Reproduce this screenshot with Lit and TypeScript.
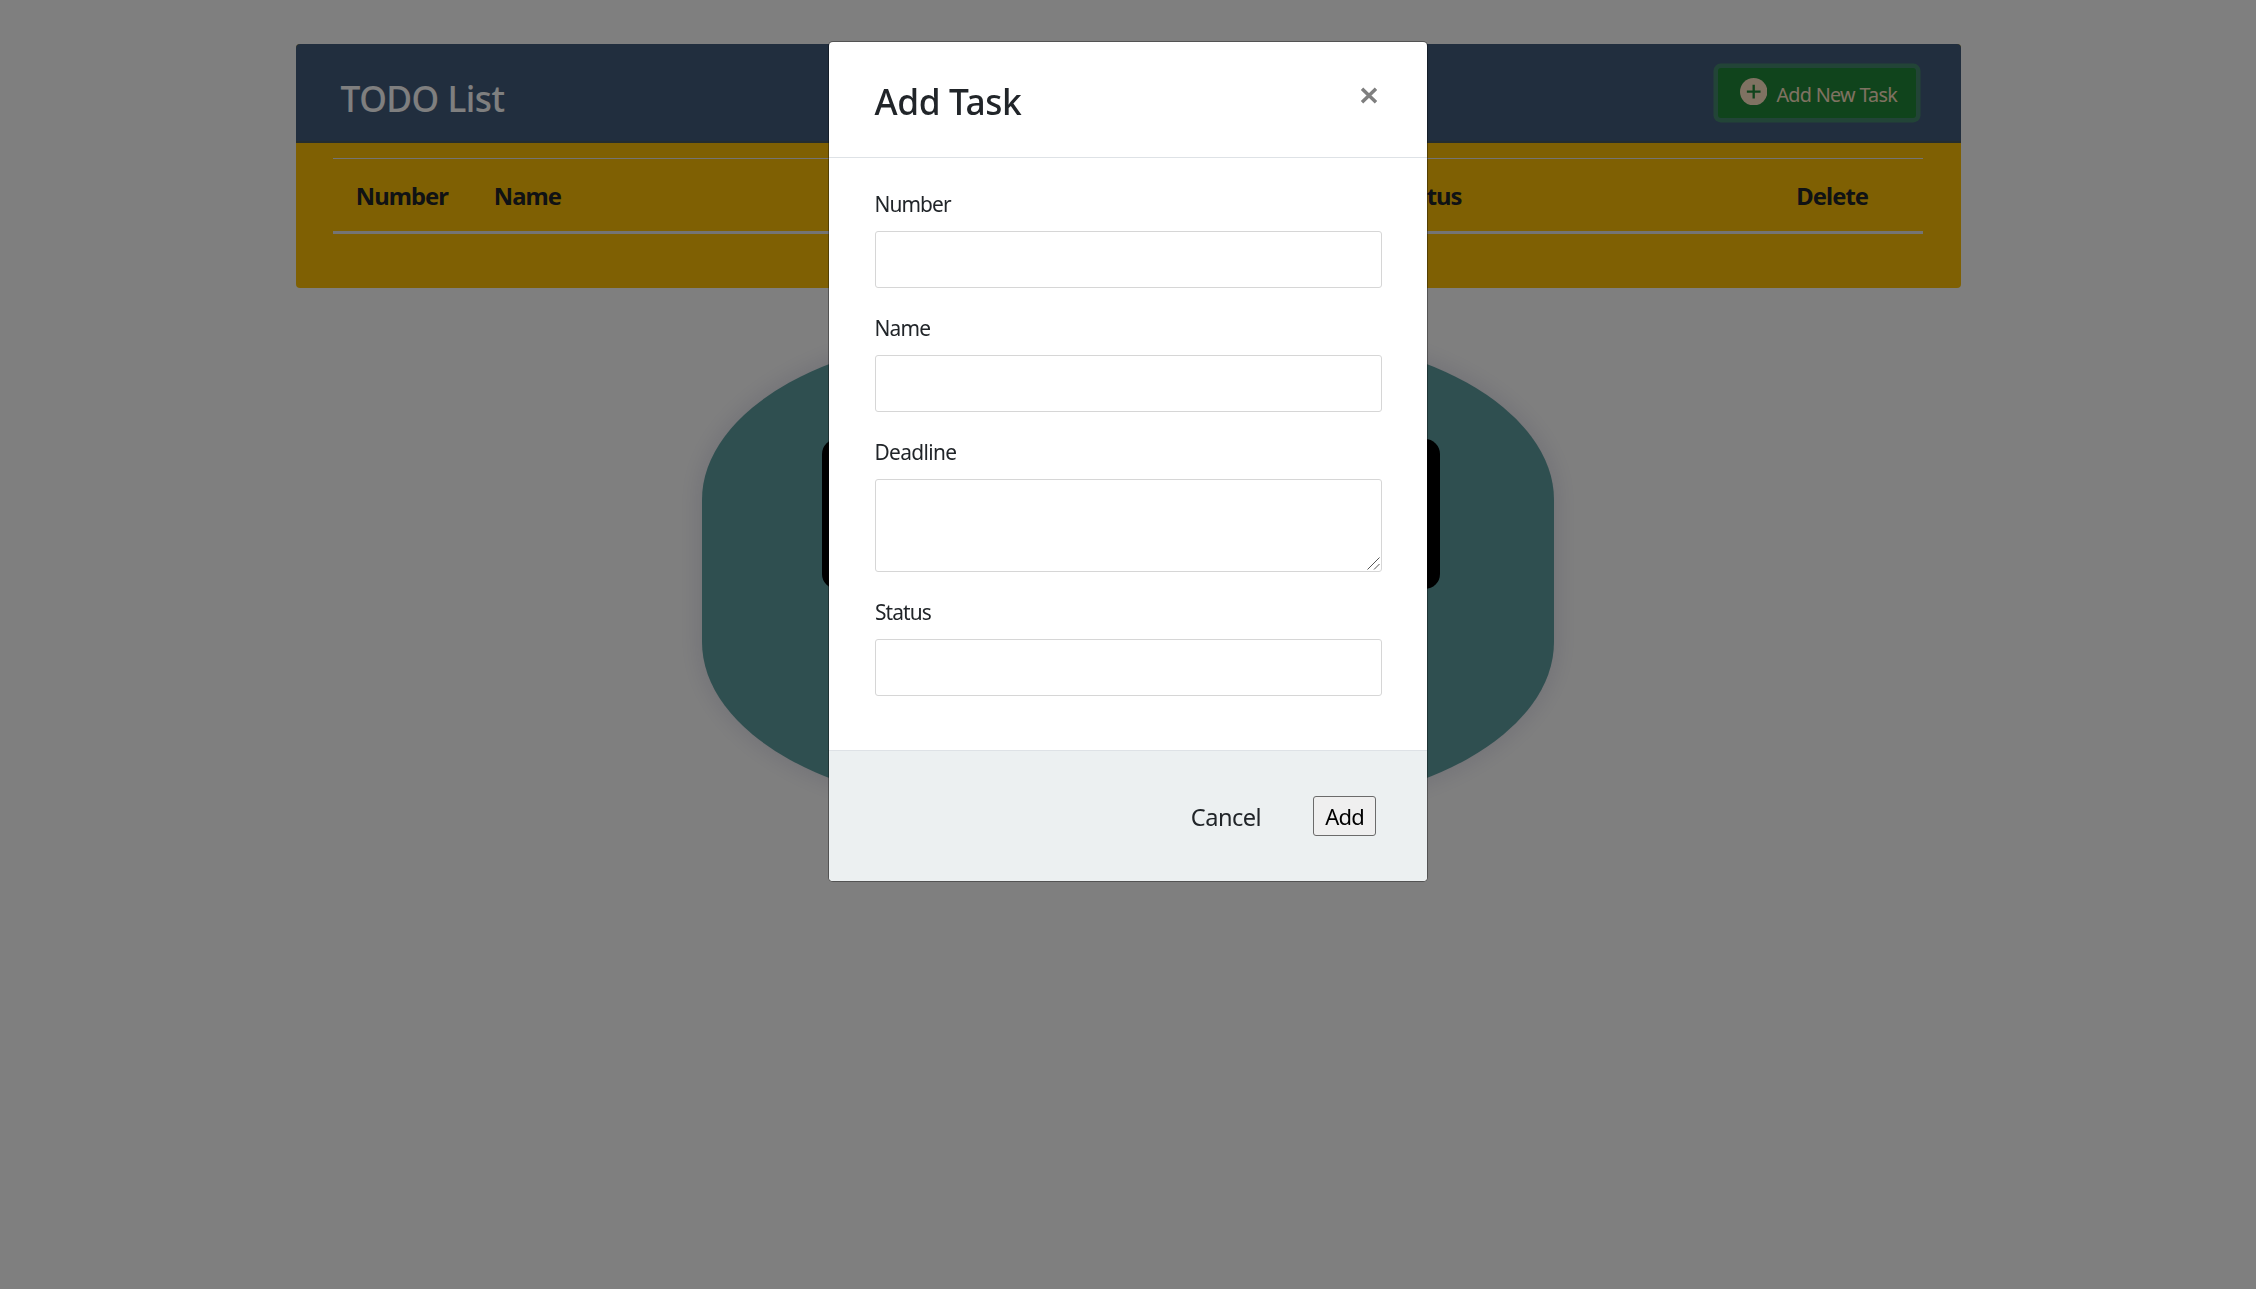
import { LitElement, html, css } from "lit";
import { customElement } from "lit/decorators.js";

@customElement("task-list")
class TaskList extends LitElement {
  static styles = css`
    :host { display: block; }
    .card { background: #ffc107; border-radius: 4px; height: 244px; overflow: hidden; }
    .head {
      box-sizing: border-box; height: 99px; background: #435d7d; border-bottom: 2px solid #4a5a5e;
      display: flex; justify-content: space-between; align-items: flex-start;
      padding: 23.5px 44.5px 0 45px;
    }
    .title { margin: 6.9px 0 0; font-size: 35.3px; line-height: 48px; font-weight: 500; color: #fff; letter-spacing: -0.5px; }
    .new {
      box-sizing: border-box; width: 198px; height: 50.5px; border: 0; border-radius: 3px; padding: 0 0 0 22px;
      background: #218838; color: #ffe4c4; box-shadow: 0 0 0 4.5px rgba(72, 180, 97, 0.5);
      display: flex; align-items: center; gap: 9px; font: 400 19.8px/30px "Noto Sans", sans-serif; letter-spacing: -0.7px;
      white-space: nowrap;
    }
    .new svg { flex: none; width: 27.4px; height: 27.4px; margin-top: -2px; }
    .new span { padding-top: 4px; }
    .table { margin: 15px 38px 0 37px; border-top: 1px solid #e9e9e9; border-bottom: 3px solid #e9e9e9; height: 72px;
      display: grid; grid-template-columns: 138px 477px 421px 404.5px auto; padding-left: 23.3px; align-items: center; }
    .th { font-size: 23.8px; line-height: 32px; font-weight: 700; color: #212529; letter-spacing: -0.95px; padding-top: 1px; }
  `;
  render() {
    return html`
      <section class="card">
        <header class="head">
          <h2 class="title">TODO List</h2>
          <button class="new">
            <svg viewBox="0 0 28 28"><circle cx="14" cy="14" r="14" fill="#ffe4c4" /><path d="M14 7v14M7 14h14" stroke="#218838" stroke-width="2.4" /></svg>
            <span>Add New Task</span>
          </button>
        </header>
        <div class="table">
          ${["Number", "Name", "Deadline", "Status", "Delete"].map((t) => html`<div class="th">${t}</div>`)}
        </div>
      </section>
    `;
  }
}

@customElement("task-dialog")
class TaskDialog extends LitElement {
  static styles = css`
    :host { display: block; width: 598px; height: 839px; background: #fff; border-radius: 4px; overflow: hidden; box-shadow: 0 0 0 1px rgba(0, 0, 0, 0.35); color: #212529; }
    .head { box-sizing: border-box; height: 116px; border-bottom: 1px solid #dee2e6; padding: 35.4px 49px 0 45.5px; display: flex; justify-content: space-between; }
    .title { margin: 0; font-size: 35.3px; line-height: 48px; font-weight: 500; letter-spacing: -0.4px; }
    .close { width: 18px; height: 17px; margin-top: 9.8px; display: block; }
    .body { padding: 31px 45.5px 54.3px 46px; display: grid; gap: 25.4px; }
    .field { display: grid; gap: 12px; }
    .label { font-size: 20.9px; line-height: 30px; margin-left: -0.5px; }
    .number { letter-spacing: -0.9px; }
    .name { letter-spacing: -0.8px; }
    .deadline { letter-spacing: -0.65px; }
    .status { letter-spacing: -0.9px; margin-left: 0; }
    .input { box-sizing: border-box; width: 100%; height: 56.6px; border: 1px solid #d6d6d6; border-radius: 3px; background: #fff; display: block; margin: 0; outline: 0; }
    .area { position: relative; height: 92.7px; }
    .area .input { height: 100%; resize: none; }
    .grip { position: absolute; right: 2px; bottom: 2px; width: 13px; height: 13px; }
    .foot { box-sizing: border-box; height: 131px; background: #ecf0f1; border-top: 1px solid #dee2e6; display: flex; justify-content: flex-end; align-items: flex-start; gap: 52px; padding: 45px 51px 0 0; }
    .cancel { border: 0; padding: 0; background: none; color: #212529; font: 400 23.6px/40px "Noto Sans", sans-serif; letter-spacing: -0.55px; padding-top: 1px; }
    .add { box-sizing: border-box; width: 63px; height: 40px; border: 1px solid #6b6b6b; border-radius: 3px; background: #efefef; color: #000; padding: 1px 0 0; font: 400 22px/36px "Noto Sans", sans-serif; letter-spacing: -0.8px; }
  `;
  private field(name: string) {
    return html`<div class="field">
      <label class="label ${name.toLowerCase()}">${name}</label>
      ${name === "Deadline"
        ? html`<div class="area"><textarea class="input"></textarea>
            <svg class="grip" viewBox="0 0 13 13"><path d="M0.5 12.5L12.5 0.5M7 12.5L12.5 7" stroke="#555" fill="none" /></svg></div>`
        : html`<input class="input" type="text" />`}
    </div>`;
  }
  render() {
    return html`
      <header class="head">
        <h4 class="title">Add Task</h4>
        <svg class="close" viewBox="0 0 18 17"><path d="M2 1.8L16 15.2M16 1.8L2 15.2" stroke="#7f7f7f" stroke-width="3.5" /></svg>
      </header>
      <div class="body">${["Number", "Name", "Deadline", "Status"].map((n) => this.field(n))}</div>
      <footer class="foot"><button class="cancel">Cancel</button><button class="add">Add</button></footer>
    `;
  }
}

@customElement("app-root")
class AppRoot extends LitElement {
  static styles = css`
    :host { display: block; height: 1289px; overflow: hidden; background: #fff; font-family: "Noto Sans", sans-serif; }
    .page { box-sizing: border-box; padding-top: 44px; display: flex; flex-direction: column; align-items: center; gap: 46px; }
    .list { width: 1665px; }
    .panel { box-sizing: border-box; width: 852px; height: 474px; padding: 105px 114px 0 120px; background: #5f9ea0; border-radius: 35%; box-shadow: 0 0 26px rgba(20, 20, 110, 0.15); }
    .box { height: 149.5px; border-radius: 15px; background: #000; }
    .backdrop { position: fixed; inset: 0; background: rgba(0, 0, 0, 0.5); display: flex; justify-content: center; align-items: flex-start; padding-top: 42px; }
  `;
  render() {
    return html`
      <main class="page">
        <task-list class="list"></task-list>
        <div class="panel"><div class="box"></div></div>
      </main>
      <div class="backdrop"><task-dialog></task-dialog></div>
    `;
  }
}
